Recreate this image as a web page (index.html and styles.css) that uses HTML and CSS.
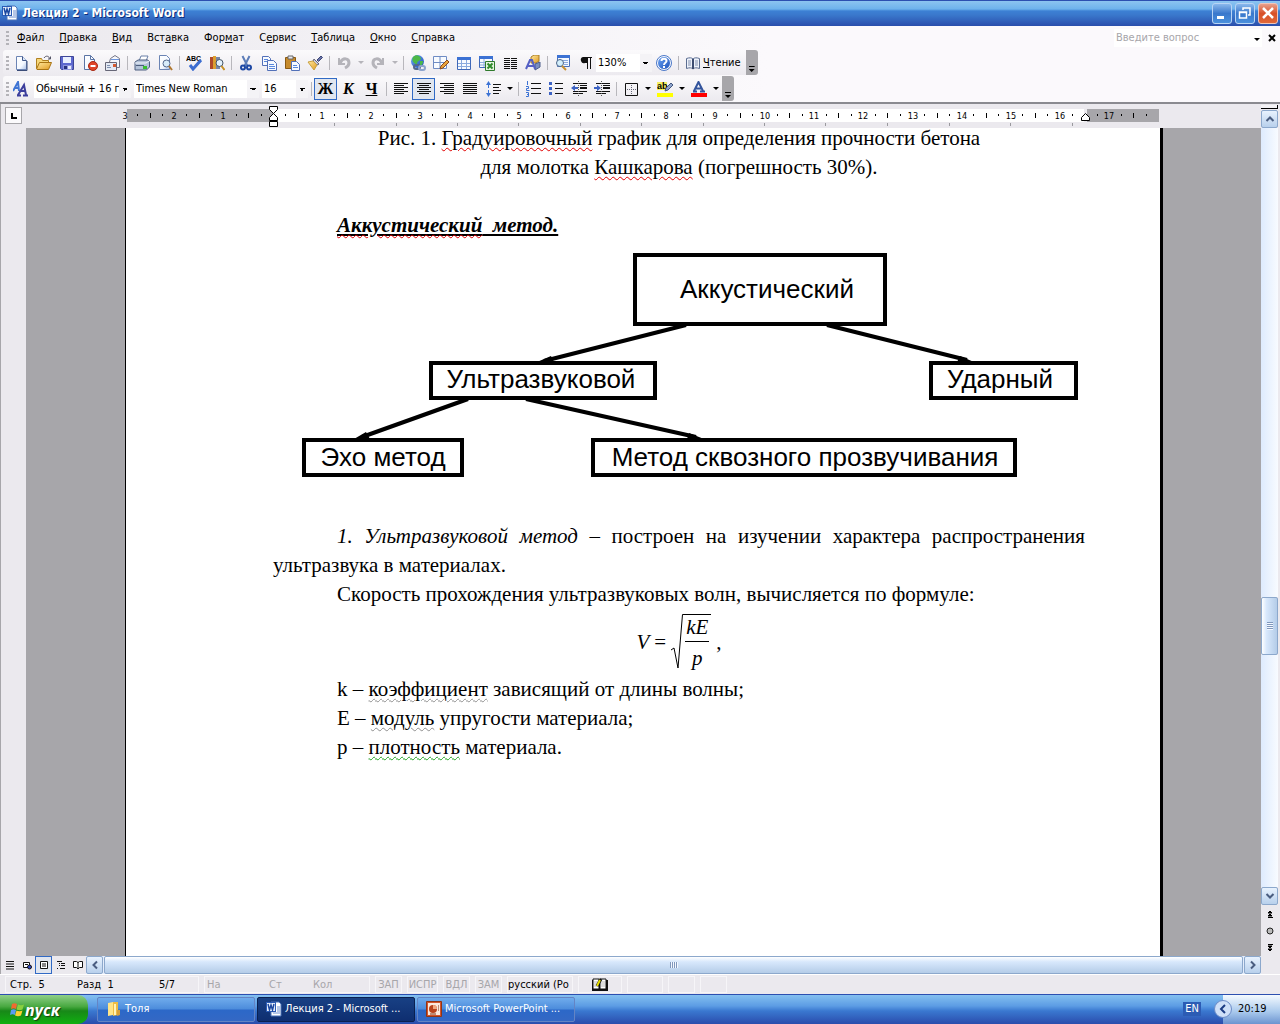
FILE: index.html
```html
<!DOCTYPE html>
<html lang="ru">
<head>
<meta charset="utf-8">
<title>Лекция 2 - Microsoft Word</title>
<meta name="viewport" content="width=device-width, initial-scale=1">
<link rel="stylesheet" href="styles.css">
</head>
<body>
<svg class="sprite" aria-hidden="true">
  <defs>
    <linearGradient id="sheet" x1="0" y1="0" x2="1" y2="1"><stop offset="0" stop-color="#fff"/><stop offset=".6" stop-color="#f4f8ff"/><stop offset="1" stop-color="#a9bfe6"/></linearGradient>
    <linearGradient id="gold" x1="0" y1="0" x2="1" y2="1"><stop offset="0" stop-color="#ffe9a0"/><stop offset="1" stop-color="#e09a20"/></linearGradient>
    <linearGradient id="blue" x1="0" y1="0" x2="1" y2="1"><stop offset="0" stop-color="#6ea6f4"/><stop offset="1" stop-color="#1c50b8"/></linearGradient>
  </defs>
  <symbol id="word" viewBox="0 0 16 16"><path d="M5 1h8l2 2v12H5z" fill="#fff" stroke="#4a72b8"/><path d="M11 6h3M11 8h3M11 10h3M7 12h7" stroke="#6d8fd0"/><path d="M0 1h10v10H0z" fill="#2a5bb5"/><path d="M1 2h8v8H1z" fill="#e6eefb"/><path d="M2 3l1.500 6L5 4l1.500 5L8 3" fill="none" stroke="#1c48a0" stroke-width="1.500"/></symbol>
  <symbol id="new" viewBox="0 0 16 16"><path d="M3.500 1.500h6l4 4v9h-10z" fill="url(#sheet)" stroke="#6b84b4"/><path d="M9.500 1.500v4h4" fill="#dce8fa" stroke="#44598a"/><path d="M4 15.500h10V6" fill="none" stroke="#3b4c78"/></symbol>
  <symbol id="open" viewBox="0 0 16 16"><path d="M.5 13.500v-10h5l1 2h6v2" fill="#f6d77a" stroke="#b08020"/><path d="M.5 14l3-6.500H15.500L12.500 14.500H1z" fill="url(#gold)" stroke="#a87414"/><path d="M8 3c2-3 5-2 6 1M12 4h2.500V1.500" fill="none" stroke="#556"/></symbol>
  <symbol id="save" viewBox="0 0 16 16"><path d="M1.500 1.500h13v13h-12l-1-1z" fill="#5d68cf" stroke="#3d4597"/><path d="M4 2h8v6H4z" fill="#e9efff"/><path d="M4 10h9v5H4z" fill="#8c94dc"/><path d="M5 11h3v3H5z" fill="#26307e"/><path d="M9 11h3v3H9z" fill="#e8ecff"/></symbol>
  <symbol id="perm" viewBox="0 0 16 16"><path d="M2.500.500h6l4 4v10h-10z" fill="url(#sheet)" stroke="#5b74a4"/><path d="M8.500.500v4h4" fill="none" stroke="#5b74a4"/><circle cx="11" cy="11" r="4.500" fill="#e04428" stroke="#a82a14"/><path d="M8.500 11h5" stroke="#fff" stroke-width="2"/></symbol>
  <symbol id="mail" viewBox="0 0 16 16"><path d="M4.500 7L5.500 3.500 10 .5l4.500 3v9h-10z" fill="#f5f7fb" stroke="#778"/><path d="M.5 7.500h11v8H.5z" fill="#e3e9f3" stroke="#667"/><path d="M2 12.500h4M2 10.500h3" stroke="#8090b0"/><path d="M8 9h3v3H8z" fill="#d65a30"/><path d="M6 4.500h8" stroke="#6d94dc"/></symbol>
  <symbol id="print" viewBox="0 0 16 16"><path d="M5 6l2-5h7l-2 5z" fill="#fff" stroke="#6a80a8"/><path d="M1 7l3-2h10l1.500 2v5l-3 3H1z" fill="#b4c3da" stroke="#4d5f80"/><path d="M1 8h11l3-2" fill="none" stroke="#f2f6fc"/><path d="M2 10.500h8" stroke="#4c5d7c"/><path d="M9 11h4v3H9z" fill="#38c030"/></symbol>
  <symbol id="preview" viewBox="0 0 16 16"><path d="M2.500.500h7l3 3v11h-10z" fill="url(#sheet)" stroke="#6b84b4"/><circle cx="9.500" cy="8.500" r="3.500" fill="#d8ecfa" stroke="#54698e"/><path d="M12 11l3 4" stroke="#b07830" stroke-width="2"/></symbol>
  <symbol id="research" viewBox="0 0 16 16"><path d="M1 2h3v12H1z" fill="#b04a2a"/><path d="M4 1h3v13H4z" fill="#dca030"/><path d="M7 2h4v12H7z" fill="#7886a8"/><circle cx="10.500" cy="8" r="3.500" fill="#e2f1fc" stroke="#456"/><path d="M12.500 11l3 4" stroke="#c79022" stroke-width="2"/></symbol>
  <symbol id="cut" viewBox="0 0 16 16"><path d="M4.500 1L9.500 11M11.500 1L6.500 11" stroke="#5c7db8" stroke-width="2"/><circle cx="5" cy="12.500" r="2" fill="none" stroke="#1d48a4" stroke-width="2"/><circle cx="11" cy="12.500" r="2" fill="none" stroke="#1d48a4" stroke-width="2"/></symbol>
  <symbol id="copy" viewBox="0 0 16 16"><path d="M1.500 1.500h6l2 2v7h-8z" fill="#f7faff" stroke="#5270b8"/><path d="M3 4.500h4M3 6.500h4" stroke="#5a88dc"/><path d="M6.500 5.500h6l3 3v7h-9z" fill="#f7faff" stroke="#5270b8"/><path d="M8 9.500h5M8 11.500h6M8 13.500h6" stroke="#5a88dc"/></symbol>
  <symbol id="paste" viewBox="0 0 16 16"><path d="M1.500 2.500h10v11h-10z" fill="#c78b2c" stroke="#8a5a14"/><path d="M4 1h5v3H4z" fill="#e8e8ee" stroke="#666"/><path d="M7.500 6.500h5l3 3v6h-8z" fill="#f7faff" stroke="#5270b8"/><path d="M9 10.500h4M9 12.500h5" stroke="#5a88dc"/></symbol>
  <symbol id="brush" viewBox="0 0 16 16"><path d="M10 5l4-4 1.500 1.500-4 4z" fill="#6a74a8" stroke="#3d4678"/><path d="M7 4l5 5-2 1-4-4z" fill="#c8c8d8" stroke="#667"/><path d="M1 7l5-1 4 4-3 5z" fill="url(#gold)" stroke="#c8a040"/></symbol>
  <symbol id="undo" viewBox="0 0 16 16"><path d="M3 3v6h6" fill="none" stroke="#b5b4ba" stroke-width="2"/><path d="M4 8c3-6 9-5 9 0 0 3-2 4-4 5" fill="none" stroke="#b5b4ba" stroke-width="3"/></symbol>
  <symbol id="redo" viewBox="0 0 16 16"><path d="M13 3v6H7" fill="none" stroke="#b5b4ba" stroke-width="2"/><path d="M12 8C9 2 3 3 3 8c0 3 2 4 4 5" fill="none" stroke="#b5b4ba" stroke-width="3"/></symbol>
  <symbol id="link" viewBox="0 0 16 16"><circle cx="7.500" cy="6.500" r="6.500" fill="url(#blue)"/><path d="M3 2c3-3 6-2 8 1 0 3-4 2-4 6-3 0-6-3-4-7zM10 6l3 0c0 3-1 4-3 5z" fill="#4cb848"/><rect x="4" y="10" width="6" height="4" rx="2" fill="none" stroke="#56688c" stroke-width="2"/><rect x="9" y="11" width="6" height="4" rx="2" fill="none" stroke="#8ba2cc" stroke-width="2"/></symbol>
  <symbol id="tabpen" viewBox="0 0 16 16"><path d="M.5 1.500h13v12H.500zM.5 7.500h13M7 1.500v12" fill="#f8fbff" stroke="#6f8cc4"/><path d="M7 14l1-3 6-6 2 2-6 6z" fill="#e9a33a" stroke="#8a4a20"/></symbol>
  <symbol id="table" viewBox="0 0 16 16"><path d="M1.500 2.500h13v12h-13z" fill="#f8fbff" stroke="#3f68b8"/><path d="M1 2h14v3H1z" fill="#3c72d4"/><path d="M2 8.500h12M2 11.500h12M5.500 5v9M10.500 5v9" stroke="#8aaade"/></symbol>
  <symbol id="excel" viewBox="0 0 16 16"><path d="M.5 1.500h13v11H.500z" fill="#f8fbff" stroke="#3f68b8"/><path d="M0 1h14v3H0z" fill="#3c72d4"/><path d="M1 7.500h12M1 10h12M5 4v8" stroke="#8aaade"/><path d="M6.500 6.500h9v9h-9z" fill="#e4f4df" stroke="#2f7a2c"/><path d="M8.500 8.500l5 5M13.500 8.500l-5 5" stroke="#2f8a2c" stroke-width="2"/></symbol>
  <symbol id="cols" viewBox="0 0 16 16"><path d="M2 3.500h6M2 5.500h6M2 7.500h6M2 9.500h6M2 11.500h6M2 13.500h6M9 3.500h6M9 5.500h6M9 7.500h6M9 9.500h6M9 11.500h6M9 13.500h6" stroke="#111"/></symbol>
  <symbol id="draw" viewBox="0 0 16 16"><path d="M6 2l3-2h5v6l-3 2H6z" fill="url(#gold)" stroke="#a87c24"/><path d="M10 9l5-2v5l-5 3z" fill="#7a8ec0" stroke="#4d5c8a"/><path d="M1 14L5 5h2l3 9M3 11h6" fill="none" stroke="#5560c4" stroke-width="2"/></symbol>
  <symbol id="map" viewBox="0 0 16 16"><path d="M3.500.500h12v11h-12z" fill="#f4f8ff" stroke="#4a70b8"/><path d="M3 0h13v3H3z" fill="#3c72d4"/><path d="M9 5.500h5M10 7.500h4M10 9.500h4" stroke="#8aaade"/><circle cx="6" cy="8" r="3.500" fill="#d4effc" stroke="#4b6488"/><path d="M8 11l4 4" stroke="#c89030" stroke-width="2"/></symbol>
  <symbol id="para" viewBox="0 0 16 16"><path d="M6 2h9v1h-1v11h-1V3h-2v11h-1V8H8a3 3 0 01-2-6z" fill="#111"/></symbol>
  <symbol id="help" viewBox="0 0 16 16"><circle cx="8" cy="8" r="6.500" fill="url(#blue)" stroke="#fff"/><circle cx="8" cy="8" r="7.500" fill="none" stroke="#4b78c8"/><path d="M5.500 6c0-3 5-3 5 0 0 2-2.500 1.500-2.500 4M8 11v2" fill="none" stroke="#fff" stroke-width="2"/></symbol>
  <symbol id="book" viewBox="0 0 16 16"><path d="M1.500 3.500c3-1 5-1 6.500.500 1.500-1.500 3.500-1.500 6.500-.5v10c-3-1-5-1-6.500.5-1.500-1.500-3.500-1.500-6.500-.5z" fill="#eef2fa" stroke="#5a6c90"/><path d="M8 4v10" stroke="#3c4c70" stroke-width="2"/><path d="M3 6h3M3 8h3M3 10h3M10 6h3M10 8h3M10 10h3" stroke="#8291b0"/></symbol>
  <symbol id="styles" viewBox="0 0 16 16"><path d="M0 10L5 1l1 9M2 7h4" fill="none" stroke="#3f74d4" stroke-width="2"/><path d="M5 14l6-10 2 10M8 10h5M4 14.500h4M10 14.500h5" fill="none" stroke="#3c3e9c" stroke-width="2"/></symbol>
  <symbol id="al" viewBox="0 0 16 16"><path d="M1 2.500h14M1 4.500h10M1 6.500h14M1 8.500h10M1 10.500h14M1 12.500h10" stroke="#111"/></symbol>
  <symbol id="ac" viewBox="0 0 16 16"><path d="M1 2.500h14M3 4.500h10M1 6.500h14M3 8.500h10M1 10.500h14M3 12.500h10" stroke="#111"/></symbol>
  <symbol id="ar" viewBox="0 0 16 16"><path d="M1 2.500h14M5 4.500h10M1 6.500h14M5 8.500h10M1 10.500h14M5 12.500h10" stroke="#111"/></symbol>
  <symbol id="aj" viewBox="0 0 16 16"><path d="M1 2.500h14M1 4.500h14M1 6.500h14M1 8.500h14M1 10.500h14M1 12.500h14" stroke="#111"/></symbol>
  <symbol id="spacing" viewBox="0 0 16 16"><path d="M3.500 2v12" stroke="#3c72d4" stroke-dasharray="5 2"/><path d="M1 4l2.500-4L6 4zM1 12l2.500 4L6 12z" fill="#3c72d4"/><path d="M8 3.500h8M8 6.500h6M8 9.500h8M8 12.500h6" stroke="#111"/></symbol>
  <symbol id="ol" viewBox="0 0 16 16"><path d="M2.500 0v4M1 5.500h2.500v2H1.500v2h3M1 11.500h2.500v4H1M2 13.500h2" fill="none" stroke="#3c72d4"/><path d="M6 2.500h10M6 7.500h10M6 12.500h10" stroke="#111"/></symbol>
  <symbol id="ul" viewBox="0 0 16 16"><path d="M1 1h3v3H1zM1 6h3v3H1zM1 11h3v3H1z" fill="#3c62c4"/><path d="M7 2.500h8M7 7.500h8M7 12.500h8" stroke="#111"/></symbol>
  <symbol id="out" viewBox="0 0 16 16"><path d="M2 2.500h14M9 4.500h7M2 10.500h14M2 12.500h10" stroke="#111"/><path d="M9 6h7v2H9z" fill="#111"/><path d="M0 7l4-3v2h3v2H4v2z" fill="#3c62c4"/><path d="M7.500 0v15" stroke="#555" stroke-dasharray="1 1"/></symbol>
  <symbol id="in" viewBox="0 0 16 16"><path d="M2 2.500h14M9 4.500h7M2 10.500h14M2 12.500h10" stroke="#111"/><path d="M9 6h7v2H9z" fill="#111"/><path d="M7 7L3 4v2H0v2h3v2z" fill="#3c62c4"/><path d="M7.500 0v15" stroke="#555" stroke-dasharray="1 1"/></symbol>
  <symbol id="border" viewBox="0 0 16 16"><path d="M2.500 2.500h12v12h-12z" fill="none" stroke="#111"/><path d="M8.500 4v10M4 8.500h10" stroke="#667" stroke-dasharray="1 1"/></symbol>
  <symbol id="fontcolor" viewBox="0 0 16 16"><path d="M3 10L7.500 1l4.500 9M5 7.500h6M2 10.500h4M9 10.500h5" fill="none" stroke="#33549c" stroke-width="2"/><path d="M0 12h16v4H0z" fill="red"/></symbol>
  <symbol id="folder" viewBox="0 0 16 16"><path d="M2 2l5-1v13l-5 1z" fill="#ffe488"/><path d="M7 1h5v13l-5 1z" fill="#eebc44"/><path d="M8 3h2v11H8z" fill="#fff2b8"/><path d="M11 9h3v5l-3 1z" fill="#d8a038"/></symbol>
  <symbol id="ppt" viewBox="0 0 16 16"><path d="M.5.500h15v15H.5z" fill="#d4542a" stroke="#8f3414"/><path d="M2 2h12v12H2z" fill="#fbe9dd"/><circle cx="7" cy="8" r="4" fill="#b8431c"/><path d="M7 4v4h4a4 4 0 00-4-4z" fill="#f2a880"/><path d="M12 5h1M12 7h1M12 9h1M4 13h6" stroke="#803010"/></symbol>
  <symbol id="flag" viewBox="0 0 16 16"><path d="M3 2c2-1 3-1 5 0L7 7C5 6 4 6 2 7z" fill="#f06a30"/><path d="M9 2.500c2 1 4 1 6 0L13.500 7.500c-2 1-4 1-6 0z" fill="#8ad040"/><path d="M2 8c2-1 3-1 5 0L6 13c-2-1-3-1-5 0z" fill="#5a9cf0"/><path d="M7.500 8.500c2 1 4 1 6 0L12 13.500c-2 1-4 1-6 0z" fill="#fcd030"/></symbol>
  <symbol id="v1" viewBox="0 0 10 10"><path d="M1 1.500h8M1 4h8M1 6.500h8M1 9h8" stroke="#111"/></symbol>
  <symbol id="v2" viewBox="0 0 10 10"><path d="M1.500 2.500h6v5h-6zM3 4.500h3" fill="#fff" stroke="#111"/><circle cx="7.500" cy="7" r="2" fill="#3048c0" stroke="#111"/></symbol>
  <symbol id="v3" viewBox="0 0 10 10"><path d="M1.500 1.500h7v7h-7zM3 4h4M3 6h4" fill="#fff" stroke="#111"/></symbol>
  <symbol id="v4" viewBox="0 0 10 10"><path d="M1 1.500h5M3 3.500h1M5 3.500h4M3 5.500h1M5 5.500h4M1 8.500h1M4 8.500h5" stroke="#111"/></symbol>
  <symbol id="v5" viewBox="0 0 10 10"><path d="M.5 1.500h3l1.500 1 1.500-1h3v6h-3L5 9 3.500 7.500h-3zM5 2v7" fill="#fff" stroke="#111"/></symbol>
  <symbol id="proof" viewBox="0 0 18 14"><path d="M1 2h16v11H1z" fill="#111"/><path d="M2 1h6v10H2zM9 1h6v10H9z" fill="#fff" stroke="#111"/><path d="M3 4h4M3 6h4M3 8h4M10 4h4M10 6h4M10 8h4" stroke="#bbb"/><path d="M6 8l4-7" stroke="#111" stroke-width="3"/><path d="M6 8l3-6" stroke="#e8e000" stroke-width="2"/></symbol>
  <symbol id="up" viewBox="0 0 10 10"><path d="M1.500 7L5 3.500 8.500 7" fill="none" stroke="#4a5d80" stroke-width="2"/></symbol>
  <symbol id="down" viewBox="0 0 10 10"><path d="M1.500 3L5 6.500 8.500 3" fill="none" stroke="#4a5d80" stroke-width="2"/></symbol>
  <symbol id="left" viewBox="0 0 10 10"><path d="M7 1.500L3.500 5 7 8.500" fill="none" stroke="#4a5d80" stroke-width="2"/></symbol>
  <symbol id="right" viewBox="0 0 10 10"><path d="M3 1.500L6.500 5 3 8.500" fill="none" stroke="#4a5d80" stroke-width="2"/></symbol>
</svg>

<header class="titlebar">
  <svg class="ic"><use href="#word"/></svg>
  <h1 class="caption">Лекция 2 - Microsoft Word</h1>
  <button class="winbtn" aria-label="Свернуть"><svg viewBox="0 0 18 18"><path d="M4 12h7v3H4z" fill="#fff"/></svg></button>
  <button class="winbtn" aria-label="Восстановить"><svg viewBox="0 0 18 18"><path d="M7 6V4h7v7h-2M3.500 8h7v6h-7zM3 8.500h8" fill="none" stroke="#fff" stroke-width="1.500"/></svg></button>
  <button class="winbtn close" aria-label="Закрыть"><svg viewBox="0 0 18 18"><path d="M4 4l10 10M14 4L4 14" stroke="#fff" stroke-width="2.500"/></svg></button>
</header>

<div class="bars">
  <nav class="menubar">
    <span class="grip"></span>
    <button><u>Ф</u>айл</button><button><u>П</u>равка</button><button><u>В</u>ид</button><button>Вст<u>а</u>вка</button><button>Фор<u>м</u>ат</button><button>С<u>е</u>рвис</button><button><u>Т</u>аблица</button><button><u>О</u>кно</button><button><u>С</u>правка</button>
    <div class="ask"><input type="text" placeholder="Введите вопрос" aria-label="Введите вопрос"><button class="arrow" aria-label="Список вопросов"></button></div>
    <button class="closedoc" aria-label="Закрыть документ"><svg viewBox="0 0 8 8"><path d="M1 1l6 6M7 1L1 7" stroke="#000" stroke-width="2"/></svg></button>
  </nav>

  <div class="toolbar" role="toolbar" aria-label="Стандартная">
    <span class="grip"></span>
    <button class="tb" aria-label="Создать"><svg class="ic"><use href="#new"/></svg></button>
    <button class="tb" aria-label="Открыть"><svg class="ic"><use href="#open"/></svg></button>
    <button class="tb" aria-label="Сохранить"><svg class="ic"><use href="#save"/></svg></button>
    <button class="tb" aria-label="Разрешения"><svg class="ic"><use href="#perm"/></svg></button>
    <button class="tb" aria-label="Сообщение"><svg class="ic"><use href="#mail"/></svg></button>
    <span class="sep"></span>
    <button class="tb" aria-label="Печать"><svg class="ic"><use href="#print"/></svg></button>
    <button class="tb" aria-label="Предварительный просмотр"><svg class="ic"><use href="#preview"/></svg></button>
    <span class="sep"></span>
    <button class="tb" aria-label="Правописание"><svg class="ic" viewBox="0 0 16 16"><text x="0" y="6" class="ic-abc">ABC</text><path d="M4 10l3 4 8-9" fill="none" stroke="#3c6cd0" stroke-width="3"/></svg></button>
    <button class="tb" aria-label="Справочные материалы"><svg class="ic"><use href="#research"/></svg></button>
    <span class="sep"></span>
    <button class="tb" aria-label="Вырезать"><svg class="ic"><use href="#cut"/></svg></button>
    <button class="tb" aria-label="Копировать"><svg class="ic"><use href="#copy"/></svg></button>
    <button class="tb" aria-label="Вставить"><svg class="ic"><use href="#paste"/></svg></button>
    <button class="tb" aria-label="Формат по образцу"><svg class="ic"><use href="#brush"/></svg></button>
    <span class="sep"></span>
    <button class="tb" aria-label="Отменить" disabled><svg class="ic"><use href="#undo"/></svg></button>
    <button class="arrow" aria-label="Список отмены" disabled></button>
    <button class="tb" aria-label="Вернуть" disabled><svg class="ic"><use href="#redo"/></svg></button>
    <button class="arrow" aria-label="Список возврата" disabled></button>
    <span class="sep"></span>
    <button class="tb" aria-label="Гиперссылка"><svg class="ic"><use href="#link"/></svg></button>
    <button class="tb" aria-label="Таблицы и границы"><svg class="ic"><use href="#tabpen"/></svg></button>
    <button class="tb" aria-label="Добавить таблицу"><svg class="ic"><use href="#table"/></svg></button>
    <button class="tb" aria-label="Лист Excel"><svg class="ic"><use href="#excel"/></svg></button>
    <button class="tb" aria-label="Колонки"><svg class="ic"><use href="#cols"/></svg></button>
    <button class="tb" aria-label="Рисование"><svg class="ic"><use href="#draw"/></svg></button>
    <span class="sep"></span>
    <button class="tb" aria-label="Схема документа"><svg class="ic"><use href="#map"/></svg></button>
    <button class="tb" aria-label="Непечатаемые знаки"><svg class="ic"><use href="#para"/></svg></button>
    <select class="combo zoom" aria-label="Масштаб"><option>130%</option></select>
    <button class="tb" aria-label="Справка"><svg class="ic"><use href="#help"/></svg></button>
    <span class="sep"></span>
    <button class="read"><svg class="ic"><use href="#book"/></svg><span><u>Ч</u>тение</span></button>
    <button class="more" aria-label="Параметры панели"></button>
  </div>

  <div class="toolbar" role="toolbar" aria-label="Форматирование">
    <span class="grip"></span>
    <button class="tb" aria-label="Стили"><svg class="ic"><use href="#styles"/></svg></button>
    <select class="combo style" aria-label="Стиль"><option>Обычный + 16 г</option></select>
    <select class="combo font" aria-label="Шрифт"><option>Times New Roman</option></select>
    <select class="combo size" aria-label="Размер"><option>16</option></select>
    <span class="sep"></span>
    <button class="tb letter on">Ж</button>
    <button class="tb letter"><i>К</i></button>
    <button class="tb letter"><u>Ч</u></button>
    <span class="sep"></span>
    <button class="tb" aria-label="По левому краю"><svg class="ic"><use href="#al"/></svg></button>
    <button class="tb on" aria-label="По центру"><svg class="ic"><use href="#ac"/></svg></button>
    <button class="tb" aria-label="По правому краю"><svg class="ic"><use href="#ar"/></svg></button>
    <button class="tb" aria-label="По ширине"><svg class="ic"><use href="#aj"/></svg></button>
    <button class="tb" aria-label="Междустрочный интервал"><svg class="ic"><use href="#spacing"/></svg></button>
    <button class="arrow" aria-label="Интервалы"></button>
    <span class="sep"></span>
    <button class="tb" aria-label="Нумерация"><svg class="ic"><use href="#ol"/></svg></button>
    <button class="tb" aria-label="Маркеры"><svg class="ic"><use href="#ul"/></svg></button>
    <button class="tb" aria-label="Уменьшить отступ"><svg class="ic"><use href="#out"/></svg></button>
    <button class="tb" aria-label="Увеличить отступ"><svg class="ic"><use href="#in"/></svg></button>
    <span class="sep"></span>
    <button class="tb" aria-label="Границы"><svg class="ic"><use href="#border"/></svg></button>
    <button class="arrow" aria-label="Виды границ"></button>
    <button class="tb" aria-label="Выделение цветом"><svg class="ic" viewBox="0 0 16 16"><path d="M0 1h10v8H0z" fill="#f6f060"/><text x="0" y="8" class="ic-ab">ab</text><path d="M8 10l1-3 5-5 2 2-5 5z" fill="#8fa4cc" stroke="#44587e"/><path d="M0 12h16v4H0z" fill="#ff0"/></svg></button>
    <button class="arrow" aria-label="Цвета выделения"></button>
    <button class="tb" aria-label="Цвет шрифта"><svg class="ic"><use href="#fontcolor"/></svg></button>
    <button class="arrow" aria-label="Цвета шрифта"></button>
    <button class="more" aria-label="Параметры панели"></button>
  </div>
</div>

<div class="work">
  <div class="left">
    <div class="ruler">
      <button class="tabstop" aria-label="Табуляция"><svg viewBox="0 0 15 15"><path d="M6 5v5h5" fill="none" stroke="#000" stroke-width="2"/></svg></button>
      <svg class="scale" viewBox="120 0 1045 24">
        <path d="M127 5h146v13H127zM1087 5h72v13h-72z" fill="#a7a6aa"/>
        <path d="M273 5h811v13H273z" fill="#fff"/>
        <path d="M150.500 9v5M199.500 9v5M248.500 9v5M298.500 9v5M347.500 9v5M396.500 9v5M445.500 9v5M494.500 9v5M543.500 9v5M592.500 9v5M641.500 9v5M691.500 9v5M740.500 9v5M789.500 9v5M838.500 9v5M887.500 9v5M937.500 9v5M986.500 9v5M1035.500 9v5M1133.500 9v5" stroke="#000"/>
        <path d="M137.500 10v2M162.500 10v2M186.500 10v2M211.500 10v2M236.500 10v2M261.500 10v2M285.500 10v2M310.500 10v2M334.500 10v2M359.500 10v2M383.500 10v2M408.500 10v2M432.500 10v2M458.500 10v2M482.500 10v2M507.500 10v2M531.500 10v2M556.500 10v2M580.500 10v2M605.500 10v2M629.500 10v2M654.500 10v2M678.500 10v2M703.500 10v2M727.500 10v2M752.500 10v2M777.500 10v2M802.500 10v2M826.500 10v2M851.500 10v2M875.500 10v2M900.500 10v2M924.500 10v2M949.500 10v2M973.500 10v2M998.500 10v2M1022.500 10v2M1047.500 10v2M1072.500 10v2M1097.500 10v2M1121.500 10v2M1146.500 10v2" stroke="#000"/>
        <path d="M334.500 19v3M396.500 19v3M457.500 19v3M518.500 19v3M580.500 19v3M641.500 19v3M703.500 19v3M764.500 19v3M825.500 19v3M887.500 19v3M949.500 19v3M1010.500 19v3M1072.500 19v3" stroke="#9a999e"/>
        <g class="num"><text x="125" y="15">3</text><text x="174" y="15">2</text><text x="223" y="15">1</text><text x="322" y="15">1</text><text x="371" y="15">2</text><text x="420" y="15">3</text><text x="470" y="15">4</text><text x="519" y="15">5</text><text x="568" y="15">6</text><text x="617" y="15">7</text><text x="666" y="15">8</text><text x="715" y="15">9</text><text x="765" y="15">10</text><text x="814" y="15">11</text><text x="863" y="15">12</text><text x="913" y="15">13</text><text x="962" y="15">14</text><text x="1011" y="15">15</text><text x="1060" y="15">16</text><text x="1109" y="15">17</text></g>
        <path d="M269.500 2.500h8v3l-4 4-4-4zM273.500 9.500l4 4v3h-8v-3zM269.500 17.500h8v5h-8zM1085.500 9.500l4 4v3h-8v-3z" fill="#fff" stroke="#000"/>
      </svg>
    </div>

    <div class="canvas">
      <main class="page">
        <p class="center">Рис. 1. <span class="err">Градуировочный</span> график для определения прочности бетона<br>для молотка <span class="err">Кашкарова</span> (погрешность 30%).</p>
        <p>&nbsp;</p>
        <h2 class="method"><span class="err">Аккустический</span>&nbsp; метод.</h2>
        <svg class="diagram" viewBox="273 240 812 282" role="img" aria-label="Схема методов">
          <g fill="#fff" stroke="#000" stroke-width="4">
            <path d="M635 255h250v69H635zM431 363h224v35H431zM931 363h145v35H931zM304 440h158v35H304zM593 440h422v35H593z"/>
          </g>
          <path d="M686 325L544 361M827 325L967 360M468 399L362 437M526 399L696 437" stroke="#000" stroke-width="4"/>
          <path d="M537 362l14-6 3 6zM974 362l-14-6-3 6zM354 439l12-7 4 7zM704 439l-15-6-2 6z"/>
          <g class="node"><text x="767" y="298">Аккустический</text><text x="541" y="388">Ультразвуковой</text><text x="1000" y="388">Ударный</text><text x="383" y="466">Эхо метод</text><text x="805" y="466">Метод сквозного прозвучивания</text></g>
        </svg>
        <p class="body"><i>1. Ультразвуковой метод</i> – построен на изучении характера распространения ультразвука в материалах.</p>
        <p class="body">Скорость прохождения ультразвуковых волн, вычисляется по формуле:</p>
        <div class="formula"><i>V</i><span>=</span>
          <span class="root"><svg viewBox="0 0 12 56"><path d="M0 36l3-2 4 20L11.500.500H12" fill="none" stroke="#000"/></svg><span class="frac"><i>kE</i><i>p</i></span></span><span>,</span></div>
        <p class="body">k – <span class="gram">коэффициент</span> зависящий от длины волны;</p>
        <p class="body">E – <span class="gram">модуль</span> упругости материала;</p>
        <p class="body">p – <span class="gram green">плотность</span> материала.</p>
      </main>
    </div>

    <div class="hbar">
      <button class="view" aria-label="Обычный режим"><svg><use href="#v1"/></svg></button>
      <button class="view" aria-label="Веб-документ"><svg><use href="#v2"/></svg></button>
      <button class="view on" aria-label="Разметка страницы"><svg><use href="#v3"/></svg></button>
      <button class="view" aria-label="Структура"><svg><use href="#v4"/></svg></button>
      <button class="view" aria-label="Чтение"><svg><use href="#v5"/></svg></button>
      <button class="sb" aria-label="Влево"><svg><use href="#left"/></svg></button>
      <div class="hthumb"><span class="ridges"></span></div>
      <button class="sb" aria-label="Вправо"><svg><use href="#right"/></svg></button>
    </div>
  </div>

  <div class="vbar">
    <span class="split"></span>
    <button class="sb" aria-label="Вверх"><svg><use href="#up"/></svg></button>
    <span class="track before"></span>
    <div class="vthumb"><span class="ridges"></span></div>
    <span class="track after"></span>
    <button class="sb" aria-label="Вниз"><svg><use href="#down"/></svg></button>
    <button class="browse" aria-label="Предыдущая страница"><svg viewBox="0 0 8 8"><path d="M4 1l2 2H2zM4 4l2 2H2zM2 7.500h5" stroke="#000"/></svg></button>
    <button class="browse" aria-label="Выбор объекта"><svg viewBox="0 0 8 8"><circle cx="4" cy="4" r="3" fill="#bbb" stroke="#222"/></svg></button>
    <button class="browse" aria-label="Следующая страница"><svg viewBox="0 0 8 8"><path d="M4 7L2 5h4zM4 4L2 2h4zM2 .500h5" stroke="#000"/></svg></button>
  </div>
</div>

<div class="status">
  <div class="cell pages"><span>Стр.&nbsp; 5</span><span>Разд&nbsp; 1</span><span>5/7</span></div>
  <div class="cell pos dim"><span>На</span><span>Ст</span><span>Кол</span></div>
  <div class="cell mode dim">ЗАП</div><div class="cell mode wide dim">ИСПР</div><div class="cell mode dim">ВДЛ</div><div class="cell mode dim">ЗАМ</div>
  <div class="cell lang">русский (Ро</div>
  <div class="cell check"><svg><use href="#proof"/></svg></div>
  <div class="cell blank"></div><div class="cell mode"></div><div class="cell mode"></div>
</div>

<footer class="taskbar">
  <button class="start"><svg class="ic"><use href="#flag"/></svg>пуск</button>
  <button class="task"><svg class="ic"><use href="#folder"/></svg><span>Толя</span></button>
  <button class="task active"><svg class="ic"><use href="#word"/></svg><span>Лекция 2 - Microsoft ...</span></button>
  <button class="task"><svg class="ic"><use href="#ppt"/></svg><span>Microsoft PowerPoint ...</span></button>
  <span class="en">EN</span>
  <div class="tray"><button class="hide" aria-label="Показать значки"><svg viewBox="0 0 10 10"><path d="M7 1L3 5l4 4" fill="none" stroke="#1c3c84" stroke-width="2"/></svg></button><time>20:19</time></div>
</footer>
</body>
</html>
```
FILE: styles.css
```css
* { box-sizing: border-box; }
html, body { height: 100%; }
body {
  margin: 0;
  display: flex;
  flex-direction: column;
  overflow: hidden;
  background: #ebe9ee;
  font: 11px/14px "DejaVu Sans Condensed", "DejaVu Sans", sans-serif;
  color: #000;
}
button, input, select { font: inherit; color: inherit; border: 0; padding: 0; margin: 0; background: none; border-radius: 0; }
p, h1, h2 { margin: 0; }
.sprite { position: absolute; width: 0; height: 0; }
.ic { width: 16px; height: 16px; display: block; flex: none; }
.ic-abc { font: bold 7px "Liberation Sans", sans-serif; }
.ic-ab { font: bold 9px "Liberation Sans", sans-serif; }

.titlebar {
  flex: none;
  height: 26px;
  display: flex;
  align-items: center;
  gap: 3px;
  padding: 0 2px;
  background: linear-gradient(#2c4fb0 0 1px, #8cc4f0 1px, #6eb2ec 9px, #3c80d4 11px, #3a78cc 15px, #2a4eac);
}
.caption { flex: 1; font: bold 12px/20px "DejaVu Sans Condensed", sans-serif; color: #fff; text-shadow: 1px 1px 0 #0c2c7c; padding-left: 1px; }
.winbtn { width: 20px; height: 21px; border: 1px solid #b8d4f4; border-radius: 3px; background: linear-gradient(#8ab8ec, #3a78cc 50%, #4a90dc); }
.winbtn svg { width: 18px; height: 18px; display: block; }
.winbtn.close { border-color: #f0c4b8; background: linear-gradient(#e8a08c, #d85028 50%, #e06838); }

.bars { flex: none; background: linear-gradient(90deg, #ebe9ee, #fbf9fc 60%); border-bottom: 2px solid #8a8a90; padding-left: 3px; }
.menubar { display: flex; align-items: center; height: 24px; padding-right: 4px; }
.menubar > button { padding: 0 7px 0 8px; }
.grip { width: 3px; height: 14px; margin: 0 0 0 3px; background: repeating-linear-gradient(#b4b3b8 0 2px, transparent 2px 4px); }
.ask { display: flex; margin-left: auto; width: 148px; height: 18px; background: #fff; }
.ask input { flex: 1; min-width: 0; padding: 0 2px; outline: 0; }
.ask input::placeholder { color: #a7a6aa; opacity: 1; }
.menubar > .closedoc { padding: 0 0 0 6px; }
.closedoc svg { width: 8px; height: 8px; display: block; }

.toolbar {
  display: flex;
  align-items: center;
  width: max-content;
  height: 25px;
  margin-bottom: 1px;
  border-radius: 3px;
  background: linear-gradient(#fbfafc, #eceaef);
}
.tb { width: 23px; height: 22px; display: flex; align-items: center; justify-content: center; flex: none; }
.tb.on { border: 1px solid #316ac5; background: #e1e6ef; }
.letter { font: bold 16px/20px "Liberation Serif", serif; }
.sep { width: 1px; height: 14px; margin: 0 2px 0 3px; background: #b8b7bc; }
.arrow { width: 11px; height: 20px; flex: none; display: flex; align-items: center; justify-content: center; }
.arrow::after { content: ""; border: 3px solid transparent; border-top-color: #000; border-bottom: 0; }
.arrow:disabled::after { border-top-color: #b5b4ba; }
.combo {
  appearance: none;
  height: 18px;
  padding: 0 12px 0 2px;
  background: linear-gradient(45deg, transparent 50%, #000 50%) right 6px top 8px / 3px 3px no-repeat,
    linear-gradient(-45deg, transparent 50%, #000 50%) right 3px top 8px / 3px 3px no-repeat,
    linear-gradient(#f4f3f6, #f4f3f6) right / 12px 100% no-repeat, #fff;
}
.zoom { width: 56px; }
.style { width: 97px; margin: 0 3px 0 2px; }
.font { width: 125px; margin-right: 3px; }
.size { width: 46px; }
.read { display: flex; align-items: center; gap: 2px; padding: 0 4px; }
.more { width: 12px; height: 25px; margin-left: 1px; border-radius: 0 3px 3px 0; background: #a7a6aa; display: flex; align-items: flex-end; justify-content: center; padding-bottom: 3px; }
.more::after { content: ""; width: 6px; height: 6px; background: linear-gradient(#000 0 1px, transparent 1px 3px, #000 3px); clip-path: polygon(0 0, 100% 0, 100% 50%, 50% 100%, 0 50%); }

.work { flex: 1; min-height: 0; display: flex; border-left: 1px solid #a7a6aa; }
.left { flex: 1; min-width: 0; display: flex; flex-direction: column; }
.ruler { flex: none; height: 24px; display: flex; overflow: hidden; }
.tabstop { width: 17px; height: 17px; margin: 3px 98px 0 4px; flex: none; border: 1px solid #a7a6aa; background: #fbfafc; }
.tabstop svg { width: 15px; height: 15px; display: block; }
.scale { width: 1045px; height: 24px; flex: none; }
.num { font: 9px "DejaVu Sans Condensed", sans-serif; text-anchor: middle; }
.canvas { flex: 1; min-height: 0; display: flex; margin-left: 25px; background: #a7a6aa; overflow: hidden; }
.page {
  flex: 1;
  margin: 0 98px 0 99px;
  padding: 0 75px 0 147px;
  border-left: 1px solid #000;
  border-right: 3px solid #000;
  background: #fff;
  font: 21px/29px "Liberation Serif", serif;
}
.page > :first-child { margin-top: -4px; }
.center { text-align: center; }
.body { text-indent: 64px; text-align: justify; }
.err { text-decoration: underline wavy #e00000 1px; text-underline-offset: 2px; }
.gram { text-decoration: underline wavy #909090 1px; text-underline-offset: 2px; }
.gram.green { text-decoration-color: #20a020; }
.method { padding-left: 64px; font: italic bold 21px/29px "Liberation Serif", serif; text-decoration: underline 2px; text-underline-offset: 2px; }
.diagram { display: block; width: 100%; max-width: 812px; height: 282px; }
.node { font: 26px "Liberation Sans", sans-serif; text-anchor: middle; }
.formula { display: flex; align-items: center; justify-content: center; gap: 5px; height: 66px; line-height: 24px; }
.root { display: flex; }
.root svg { width: 12px; height: 56px; }
.frac { display: flex; flex-direction: column; align-items: center; border-top: 1px solid #000; padding: 0 2px; }
.frac i:first-child { border-bottom: 1px solid #000; padding: 0 1px 2px; }
.frac i:last-child { padding-top: 4px; }

.sb { width: 17px; height: 18px; flex: none; border: 1px solid #8ca8cc; border-radius: 2px; background: linear-gradient(#e8f2fe, #b8d0ec); display: flex; align-items: center; justify-content: center; }
.sb svg, .view svg { width: 10px; height: 10px; display: block; }
.hbar { flex: none; height: 18px; display: flex; background: #e4edfb; }
.view { width: 17px; display: flex; align-items: center; justify-content: center; background: #ebe9ee; }
.view.on { border: 1px solid #316ac5; background: #e1e6ef; }
.hthumb { flex: 1; margin: 0 1px; border: 1px solid #8ca8cc; border-radius: 2px; background: linear-gradient(#fff, #d8e8fc 30%, #b4cce8); display: flex; align-items: center; justify-content: center; }
.ridges { width: 8px; height: 6px; background: repeating-linear-gradient(90deg, #8098bc 0 1px, #f4f8ff 1px 2px); }
.vbar { width: 19px; flex: none; display: flex; flex-direction: column; align-items: center; padding-right: 2px; }
.split { width: 17px; height: 4px; margin: 1px 0; border: 1px solid #000; border-width: 0 1px 1px 0; background: #f4f3f6; flex: none; }
.track { width: 100%; background: linear-gradient(90deg, #deebfe, #f8fbff); }
.before { flex: 470 0 0; }
.after { flex: 233 0 0; }
.vthumb { width: 17px; height: 58px; flex: none; border: 1px solid #8ca8cc; border-radius: 2px; background: linear-gradient(90deg, #fff, #d8e8fc 30%, #b4cce8); display: flex; align-items: center; justify-content: center; }
.vthumb .ridges { height: 8px; width: 6px; background: repeating-linear-gradient(#8098bc 0 1px, #f4f8ff 1px 2px); }
.browse { height: 17px; }
.browse:last-child { margin-bottom: 18px; }
.browse svg { width: 8px; height: 8px; display: block; }

.status { flex: none; height: 20px; display: flex; align-items: center; gap: 5px; padding-left: 5px; border-top: 1px solid #fff; }
.cell { height: 17px; padding: 1px 2px; border: 1px solid #f6f5f8; white-space: nowrap; overflow: hidden; }
.dim { color: #a7a6aa; }
.pages { width: 194px; display: grid; grid-template-columns: 67px 82px 1fr; padding-left: 4px; }
.pos { width: 166px; display: grid; grid-template-columns: 62px 44px 1fr; }
.mode { width: 27px; padding: 1px 0; text-align: center; }
.mode.wide { width: 31px; }
.lang { width: 66px; padding: 1px 0; }
.check { width: 44px; display: flex; justify-content: center; }
.check svg { width: 18px; height: 14px; }
.blank { width: 36px; }

.taskbar { flex: none; height: 30px; display: flex; align-items: center; gap: 2px; color: #fff; background: linear-gradient(#2c4fb0 0 1px, #84c0f0 1px, #5c9ce4 12px, #3a78d0 17px, #2a4cac); }
.start { width: 88px; height: 29px; margin: 1px 7px 0 0; padding-left: 9px; display: flex; align-items: center; border-radius: 0 10px 10px 0; background: linear-gradient(#90d088, #48a840 40%, #188818 55%, #10b010); font: italic bold 16px/20px "Open Sans", sans-serif; text-shadow: 1px 1px 1px #104010; }
.task { width: 158px; height: 25px; display: flex; align-items: center; gap: 3px; padding-left: 8px; border: 1px solid #6484c4; border-radius: 2px; background: linear-gradient(#70acec, #4c8cdc 48%, #2c68c8 52%, #3468c4); white-space: nowrap; }
.task.active { background: linear-gradient(#184084, #0e2e70); border-color: #0a2050; }
.en { margin-left: auto; padding: 0 2px; background: #2c5cb4; }
.tray { align-self: stretch; margin-left: 20px; width: 57px; display: flex; align-items: center; gap: 6px; color: #000; background: linear-gradient(#2c4fb0 0 1px, #f4faff 1px, #a8c8ec 60%, #6c94d0); }
.hide { width: 18px; height: 18px; margin-left: -9px; border-radius: 50%; border: 1px solid #6c8cc8; background: #cfe0f8; display: flex; align-items: center; justify-content: center; }
.hide svg { width: 10px; height: 10px; }
```
